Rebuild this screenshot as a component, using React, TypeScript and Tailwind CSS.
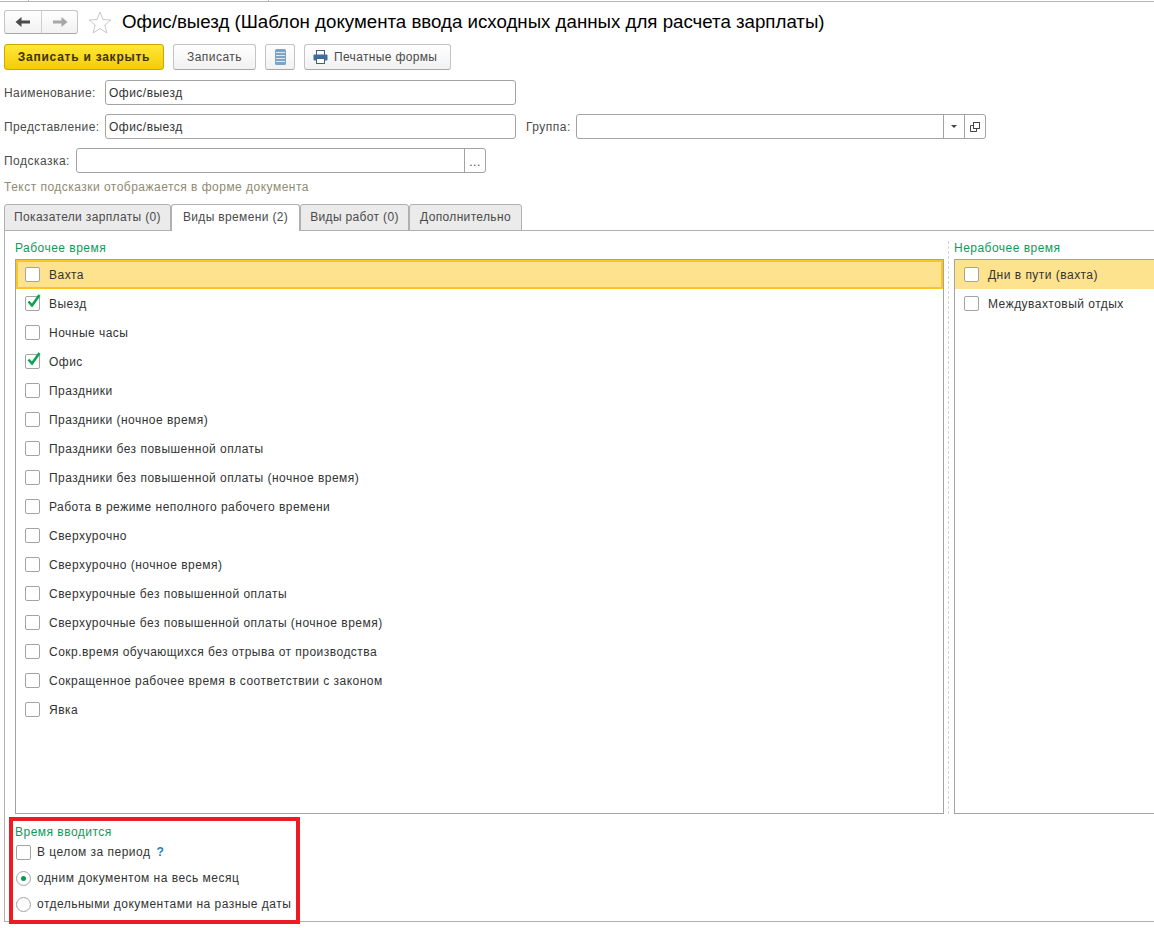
const workTypes = [
  { name: "Вахта", checked: false },
  { name: "Выезд", checked: true },
  { name: "Ночные часы", checked: false },
  { name: "Офис", checked: true },
  { name: "Праздники", checked: false },
  { name: "Праздники (ночное время)", checked: false },
  { name: "Праздники без повышенной оплаты", checked: false },
  { name: "Праздники без повышенной оплаты (ночное время)", checked: false },
  { name: "Работа в режиме неполного рабочего времени", checked: false },
  { name: "Сверхурочно", checked: false },
  { name: "Сверхурочно (ночное время)", checked: false },
  { name: "Сверхурочные без повышенной оплаты", checked: false },
  { name: "Сверхурочные без повышенной оплаты (ночное время)", checked: false },
  { name: "Сокр.время обучающихся без отрыва от производства", checked: false },
  { name: "Сокращенное рабочее время в соответствии с законом", checked: false },
  { name: "Явка", checked: false },
];

const offTypes = ["Дни в пути (вахта)", "Междувахтовый отдых"];

const tabs = [
  { name: "Показатели зарплаты (0)", width: "w-[167px]", active: false },
  { name: "Виды времени (2)", width: "w-[129px]", active: true },
  { name: "Виды работ (0)", width: "w-[109px]", active: false },
  { name: "Дополнительно", width: "w-[113px]", active: false },
];

const Checkbox = ({ checked = false }: { checked?: boolean }) => (
  <span className="relative block w-[15px] h-[15px] shrink-0 rounded-[2px] border border-[#a3a3a3] bg-white">
    {checked && (
      <svg className="absolute left-[0px] top-[-4px]" width="16" height="16" viewBox="0 0 16 16" fill="none">
        <path d="M2.5 8.5 L6 12.5 L13.5 2" stroke="#0aa34f" strokeWidth="2.6" />
      </svg>
    )}
  </span>
);

const Radio = ({ checked = false }: { checked?: boolean }) => (
  <span className="flex items-center justify-center w-[15px] h-[15px] shrink-0 rounded-full border border-[#a3a3a3] bg-white">
    {checked && <span className="block w-[5px] h-[5px] rounded-full bg-[#0b9a52]" />}
  </span>
);

const Field = ({ value = "", className }: { value?: string; className: string }) => (
  <div className={`flex items-center h-[25px] px-[3px] rounded-[3px] border border-[#a3a3a3] bg-white text-[#333] ${className}`}>
    {value}
  </div>
);

const App = () => {
  return (
    <div className="relative w-[1154px] h-[928px] overflow-hidden bg-white text-[12px] tracking-[0.48px] text-[#4a4a4a] font-['Liberation_Sans',Arial,sans-serif]">
      {/* верхняя линия */}
      <div className="flex h-[2px] border-b border-[#b5b5b5]">
        <span className="ml-[28px] w-px h-px bg-[#b5b5b5]" />
        <span className="ml-[239px] w-px h-px bg-[#b5b5b5]" />
      </div>

      {/* заголовок */}
      <div className="flex items-center h-[24px] mt-[8px] pl-1">
        <div className="flex w-[74px] h-[24px] rounded-[3px] border border-[#c4c4c4] border-b-[#a8a8a8] bg-gradient-to-b from-white to-[#f1f1f1]">
          <div className="flex items-center justify-center w-[37px] border-r border-[#cfcfcf]">
            <svg width="16" height="12" viewBox="0 0 16 12">
              <path d="M0.5 6 L6.5 1 V4.5 H15 V7.5 H6.5 V11 Z" fill="#4a4a4a" />
            </svg>
          </div>
          <div className="flex items-center justify-center flex-1">
            <svg width="16" height="12" viewBox="0 0 16 12">
              <path d="M15.5 6 L9.5 1 V4.5 H1 V7.5 H9.5 V11 Z" fill="#a6a6a6" />
            </svg>
          </div>
        </div>
        <svg className="ml-[10px]" width="24" height="23" viewBox="0 0 24 23" fill="#fff" stroke="#c8c8c8">
          <path d="M12 1 L15 8.6 L23 9 L16.8 14 L18.9 22 L12 17.6 L5.1 22 L7.2 14 L1 9 L9 8.6 Z" />
        </svg>
        <h1 className="ml-[10px] text-[18.7px] tracking-normal text-black leading-none">
          Офис/выезд (Шаблон документа ввода исходных данных для расчета зарплаты)
        </h1>
      </div>

      {/* кнопки */}
      <div className="flex gap-[9px] h-[26px] mt-[10px] pl-1">
        <button className="w-[160px] rounded-[3px] border border-[#c9a800] bg-gradient-to-b from-[#ffe733] to-[#f3cc00] font-bold tracking-[0.75px] text-[#3c3300]">
          Записать и закрыть
        </button>
        <button className="w-[83px] rounded-[3px] border border-[#c4c4c4] border-b-[#a8a8a8] bg-gradient-to-b from-white to-[#f1f1f1]">
          Записать
        </button>
        <button className="flex items-center justify-center w-[30px] rounded-[3px] border border-[#c4c4c4] border-b-[#a8a8a8] bg-gradient-to-b from-white to-[#f1f1f1]">
          <svg width="11" height="16" viewBox="0 0 11 16">
            <rect x="0" y="0" width="11" height="16" rx="1.5" fill="#7fa3c4" />
            <path d="M1 3.5H10M1 6.5H10M1 9.5H10M1 12.5H10" stroke="#dbe7f1" />
          </svg>
        </button>
        <button className="flex items-center w-[147px] pl-[8px] gap-[6px] rounded-[3px] border border-[#c4c4c4] border-b-[#a8a8a8] bg-gradient-to-b from-white to-[#f1f1f1] tracking-[0.35px]">
          <svg width="15" height="14" viewBox="0 0 15 14">
            <rect x="3.5" y="0.5" width="8" height="5" fill="#fff" stroke="#44617f" />
            <rect x="0.5" y="4.5" width="14" height="6" rx="1" fill="#3f6d9c" />
            <rect x="3.5" y="8.5" width="8" height="5" fill="#fff" stroke="#44617f" />
          </svg>
          Печатные формы
        </button>
      </div>

      {/* реквизиты */}
      <div className="flex items-center h-[25px] mt-[10px] pl-1">
        <span className="w-[101px] tracking-[0.4px]">Наименование:</span>
        <Field value="Офис/выезд" className="w-[411px]" />
      </div>
      <div className="flex items-center h-[25px] mt-[9px] pl-1">
        <span className="w-[101px] tracking-[0.4px]">Представление:</span>
        <Field value="Офис/выезд" className="w-[411px]" />
        <span className="ml-[10px] w-[50px]">Группа:</span>
        <div className="flex h-[25px] w-[410px] rounded-[3px] border border-[#a3a3a3] bg-white">
          <div className="flex-1" />
          <div className="flex items-center justify-center w-[21px] border-l border-[#a3a3a3]">
            <span className="w-0 h-0 border-x-[3px] border-t-[3px] border-x-transparent border-t-[#444]" />
          </div>
          <div className="flex items-center justify-center w-[21px] border-l border-[#a3a3a3]">
            <svg width="10" height="10" viewBox="0 0 10 10" fill="none" stroke="#444">
              <rect x="3.5" y="0.5" width="6" height="6" />
              <path d="M3 3.5H0.5V9.5H6.5V7" />
            </svg>
          </div>
        </div>
      </div>
      <div className="flex items-center h-[25px] mt-[9px] pl-1">
        <span className="w-[72px]">Подсказка:</span>
        <div className="flex h-[25px] w-[410px] rounded-[3px] border border-[#a3a3a3] bg-white">
          <div className="flex-1" />
          <div className="flex justify-center w-[21px] pt-[7px] leading-none border-l border-[#a3a3a3]">...</div>
        </div>
      </div>
      <p className="mt-[7px] pl-1 leading-[14px] text-[#8f8a72]">Текст подсказки отображается в форме документа</p>

      {/* вкладки */}
      <div className="flex h-[27px] mt-[10px] pl-1">
        {tabs.map((tab) => (
          <div
            key={tab.name}
            className={`flex items-center justify-center pb-[2px] tracking-[0.35px] ${tab.width} rounded-t-[3px] border border-[#b0b0b0] ${
              tab.active ? "border-b-0 bg-white relative z-10" : "bg-[#ebebeb]"
            }`}
          >
            {tab.name}
          </div>
        ))}
      </div>

      <div className="relative ml-1 h-[692px] -mt-px pl-[10px] pt-[10px] border-l border-t border-b border-[#b0b0b0]">
        <div className="flex">
          <div className="w-[929px] shrink-0">
            <p className="leading-[14px] text-[#0d9b5a]">Рабочее время</p>
            <div className="mt-[4px] h-[555px] border border-[#a3a3a3] bg-white">
              {workTypes.map((item, i) => (
                <div
                  key={item.name}
                  className={`flex items-center h-[29px] gap-[9px] text-[#333] ${
                    i === 0 ? "bg-[#fee38e] border-2 border-[#fbc61f] pl-[7px]" : "pl-[9px]"
                  }`}
                >
                  <Checkbox checked={item.checked} />
                  {item.name}
                </div>
              ))}
            </div>
          </div>
          <div className="w-px h-[573px] ml-[4px] border-l border-dashed border-[#d4d4d4]" />
          <div className="ml-[5px] flex-1">
            <p className="leading-[14px] text-[#0d9b5a]">Нерабочее время</p>
            <div className="mt-[4px] h-[555px] border border-r-0 border-[#a3a3a3] bg-white">
              {offTypes.map((name, i) => (
                <div
                  key={name}
                  className={`flex items-center h-[29px] pl-[9px] gap-[9px] text-[#333] ${i === 0 ? "bg-[#fee38e]" : ""}`}
                >
                  <Checkbox />
                  {name}
                </div>
              ))}
            </div>
          </div>
        </div>

        <p className="mt-[11px] leading-[14px] text-[#0d9b5a]">Время вводится</p>
        <div className="flex items-center h-[26px] gap-[6px] pl-px text-[#333]">
          <Checkbox />
          В целом за период
          <span className="font-bold text-[#1d7fc2]">?</span>
        </div>
        <div className="flex items-center h-[26px] gap-[6px] pl-px text-[#333]">
          <Radio checked />
          одним документом на весь месяц
        </div>
        <div className="flex items-center h-[26px] gap-[6px] pl-px text-[#333]">
          <Radio />
          отдельными документами на разные даты
        </div>

        {/* красная рамка поверх скриншота */}
        <div className="absolute left-[4px] top-[586px] w-[291px] h-[107px] border-4 border-[#ed1c24] pointer-events-none" />
      </div>
    </div>
  );
};

export default App;
